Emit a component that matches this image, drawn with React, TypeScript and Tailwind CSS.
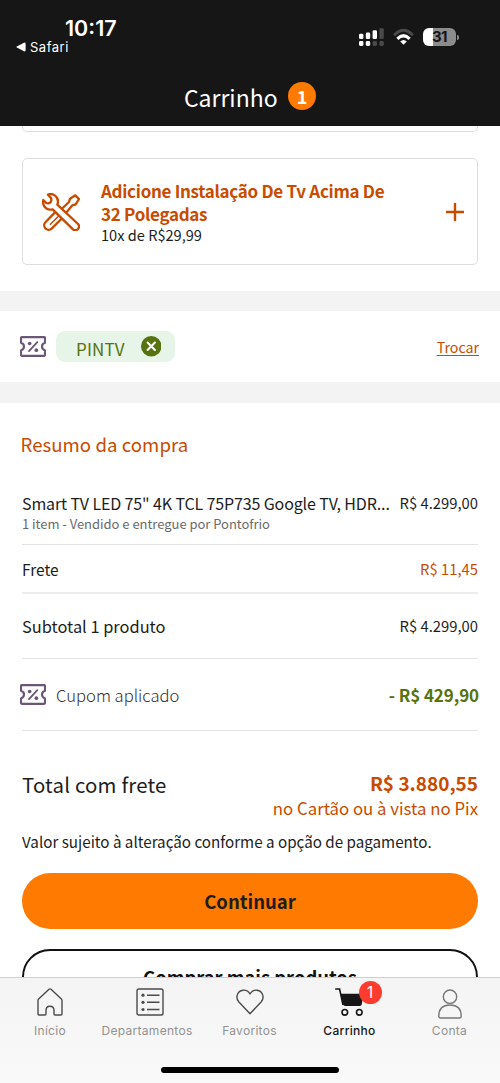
import type { ReactNode } from "react";

const brand = "font-['Noto_Sans_CJK_SC','Noto_Sans',sans-serif]";
const system = "font-['Inter','Liberation_Sans',sans-serif]";

function TicketIcon() {
  return (
    <svg viewBox="60 153 78 62" className="h-[21px] w-[26px] shrink-0" fill="none" stroke="#6b5677" strokeWidth="6.5" strokeLinejoin="round" strokeLinecap="round">
      <path d="M66 156H132Q135 156 135 159V173Q126 176 126 184T135 196V209Q135 212 132 212H66Q63 212 63 209V196Q72 192 72 184T63 173V159Q63 156 66 156Z" />
      <path d="M87 198L112 171" strokeWidth="5.5" />
      <circle cx="89" cy="175" r="5.5" fill="#6b5677" stroke="none" />
      <circle cx="109" cy="195" r="5.5" fill="#6b5677" stroke="none" />
    </svg>
  );
}

function ToolsIcon() {
  return (
    <svg viewBox="126 128 114 114" className="h-[38px] w-[38px] shrink-0" fill="none" stroke="#c84b00" strokeWidth="7" strokeLinejoin="round" strokeLinecap="round">
      <path d="M144 133C158 127 174 138 174 153Q174 158 172 163L234 221A11 11 0 0 1 219 237L158 177C144 181 129 171 129 156L130 149L139 158Q146 161 151 156T153 143Z" />
      <path d="M188 173L207 155L210 145L226 135L237 146L227 162L217 165L201 184" />
      <path d="M165 186L137 215A12 12 0 0 0 155 235L184 206" />
      <path d="M151 222L174 199" strokeWidth="4.5" />
    </svg>
  );
}

function StatusBar() {
  return (
    <div className={`flex h-[68px] justify-between ${system}`}>
      <div className="pl-4 pt-[17px]">
        <div className="pl-[49px] text-[21.5px] font-semibold leading-[22px]">10:17</div>
        <div className="flex items-center gap-[4px] text-[13px] leading-[16px] tracking-[0.5px]">
          <svg viewBox="0 0 10 10" className="h-[10px] w-[10px]" fill="white"><path d="M0.8 4.4L8 .7Q9.6 .2 9.6 1.7V8.3Q9.6 9.8 8 9.3L.8 5.6Q0 5 .8 4.4Z" /></svg>
          Safari
        </div>
      </div>
      <div className="flex items-start pr-[41px] pt-7">
        <svg viewBox="0 0 25 18" className="mr-[9.5px] h-[18px] w-[25px]" fill="white">
          <rect x="0" y="5.8" width="4.4" height="5.3" rx="1.4" />
          <rect x="6.8" y="4.5" width="4.4" height="6.6" rx="1.4" />
          <rect x="13.6" y="2.2" width="4.4" height="8.9" rx="1.4" />
          <rect x="20.4" y="0.2" width="4.4" height="10.9" rx="1.4" fill="#4a4a4a" />
          <rect x="0" y="13" width="4.4" height="5" rx="1.4" />
          <rect x="6.8" y="13" width="4.4" height="5" rx="1.4" />
          <rect x="13.6" y="13" width="4.4" height="5" rx="1.4" fill="#4a4a4a" />
          <rect x="20.4" y="13" width="4.4" height="5" rx="1.4" fill="#4a4a4a" />
        </svg>
        <svg viewBox="0 0 21 18" className="mr-[9px] h-[18px] w-[21px]" fill="none">
          <path d="M1.2 7.2Q10.5 -2.8 19.8 7.2" stroke="#4a4a4a" strokeWidth="3" />
          <path d="M4.4 10.8Q10.5 4.8 16.6 10.8" stroke="white" strokeWidth="3.2" />
          <path d="M7.2 13.6Q10.5 10.6 13.8 13.6L10.5 16.8Z" fill="white" />
        </svg>
        <div className="flex h-[18px] w-[33px] items-center justify-center rounded-[6px] bg-[linear-gradient(to_right,white_10px,#8c8c8c_10px)] text-[15px] font-bold leading-[18px] tracking-[-0.5px] text-[#161616]">31</div>
        <div className="ml-px mt-[6.5px] h-[5px] w-[2px] rounded-r-full bg-[#8c8c8c]" />
      </div>
    </div>
  );
}

function Tab({ label, active, width, children }: { label: string; active?: boolean; width: string; children: ReactNode }) {
  return (
    <div className={`flex flex-col items-center ${width}`}>
      <div className="flex h-[44px] items-center pt-[4px]">{children}</div>
      <div className={`whitespace-nowrap text-[12px] leading-[18px] tracking-[0.3px] ${active ? "font-medium text-[#161616]" : "text-[#929292]"}`}>{label}</div>
    </div>
  );
}

export default function App() {
  return (
    <div className={`flex h-[1083px] w-full flex-col overflow-hidden bg-white text-[#1d1d1d] ${brand}`}>
      <header className="h-[126px] shrink-0 bg-[#161616] text-white">
        <StatusBar />
        <div className="flex h-[58px] items-center justify-center gap-[10.5px]">
          <h1 className="text-[23px] font-normal leading-[58px]">Carrinho</h1>
          <span className="mb-[2px] flex h-7 w-7 items-center justify-center rounded-full bg-[#ff7a00] text-[18px] font-bold leading-[28px]">1</span>
        </div>
      </header>

      <main className="min-h-0 flex-1 overflow-hidden">
        <div className="mx-[22px] h-[6px] rounded-b-[5px] border border-t-0 border-[#dedede]" />

        <section className="mx-[22px] mt-[26px] flex h-[107px] items-center rounded-[5px] border border-[#dedede] pl-[19px] pr-[13px]">
          <ToolsIcon />
          <div className="ml-[21px] w-[300px]">
            <div className="whitespace-nowrap text-[17px] font-bold leading-[23px] tracking-[-0.3px] text-[#c84b00]">
              Adicione Instalação De Tv Acima De<br />32 Polegadas
            </div>
            <div className="text-[14.6px] leading-[20px]">10x de R$29,99</div>
          </div>
          <svg viewBox="0 0 18 18" className="ml-auto h-[18px] w-[18px]" stroke="#c84b00" strokeWidth="2.4"><path d="M9 0V18M0 9H18" /></svg>
        </section>

        <div className="mt-[26px] h-[20px] bg-[#f3f3f3]" />
        <section className="flex h-[71px] items-center pl-5 pr-[21px]">
          <TicketIcon />
          <div className="ml-[10px] flex h-[31px] w-[119px] items-center rounded-[9px] bg-[#e7f4e8] pl-[20px] pr-[14px] text-[#56730f]">
            <span className="pt-[4px] text-[17px] leading-[28px] tracking-[0.15px]">PINTV</span>
            <svg viewBox="0 0 20 20" className="ml-auto h-[20.5px] w-[20.5px]"><circle cx="10" cy="10" r="10" fill="#56730f" /><path d="M6.4 6.4L13.6 13.6M13.6 6.4L6.4 13.6" stroke="white" strokeWidth="2" strokeLinecap="round" /></svg>
          </div>
          <span className="ml-auto text-[14.2px] leading-5 text-[#c84b00] underline decoration-1 underline-offset-2">Trocar</span>
        </section>
        <div className="h-[21px] bg-[#f3f3f3]" />

        <section className="px-[22px]">
          <h2 className="-ml-[1.5px] pt-[28px] text-[18.6px] font-normal leading-[26px] tracking-[0.05px] text-[#c84b00]">Resumo da compra</h2>
          <div className="mt-[35px] h-[53px] border-b border-[#e2e2e2]">
            <div className="flex items-center justify-between whitespace-nowrap leading-[22px]">
              <span className="text-[16px] tracking-[-0.13px]">Smart TV LED 75" 4K TCL 75P735 Google TV, HDR...</span>
              <span className="text-[14.8px]">R$ 4.299,00</span>
            </div>
            <div className="text-[13px] leading-[20px] tracking-[-0.03px] text-[#6a6a6a]">1 item - Vendido e entregue por Pontofrio</div>
          </div>
          <div className="flex h-[49px] items-center justify-between border-b-2 border-[#ececec] pt-[2px]">
            <span className="text-[15.5px]">Frete</span>
            <span className="text-[14.8px] text-[#c84b00]">R$ 11,45</span>
          </div>
          <div className="flex h-[65px] items-center justify-between border-b border-[#e2e2e2]">
            <span className="text-[16.4px]">Subtotal 1 produto</span>
            <span className="text-[14.8px]">R$ 4.299,00</span>
          </div>
          <div className="-mr-[1px] flex h-[71px] items-center">
            <div className="-ml-[2px] flex items-center gap-[10px]">
              <TicketIcon />
              <span className="pt-px text-[16.6px] font-light text-[#303030]">Cupom aplicado</span>
            </div>
            <span className="ml-auto pt-px text-[17px] font-bold tracking-[-0.1px] text-[#56730f]">- R$ 429,90</span>
          </div>
          <div className="h-px bg-[#e2e2e2]" />
          <div className="mt-[39px] flex justify-between whitespace-nowrap">
            <span className="text-[20.4px] leading-[28px] tracking-[0.2px]">Total com frete</span>
            <div className="text-right text-[#c84b00]">
              <div className="text-[19px] font-bold leading-[26px]">R$ 3.880,55</div>
              <div className="text-[16.8px] leading-[25px]">no Cartão ou à vista no Pix</div>
            </div>
          </div>
          <div className="mt-[8px] whitespace-nowrap text-[15.2px] leading-[24px]">Valor sujeito à alteração conforme a opção de pagamento.</div>
          <button className="mt-[20px] block h-[56px] w-full rounded-full bg-[#ff7a00] text-[18.5px] font-bold leading-[56px] text-[#1d1d1d]">Continuar</button>
          <button className="mt-[20px] block h-[56px] w-full rounded-full border-[2.5px] border-[#111] text-[18.4px] font-bold leading-[51px] text-[#111]">Comprar mais produtos</button>
        </section>
      </main>

      <nav className={`flex h-[106px] shrink-0 flex-col border-t border-[#cfcfcf] bg-gradient-to-b from-[#f4f4f4] to-[#f9f9f9] ${system}`}>
        <div className="flex">
          <Tab label="Início" width="w-[100px]">
            <svg viewBox="0 0 26 28" className="h-7 w-[26px]" fill="none" stroke="#4b4b4b" strokeWidth="1.4" strokeLinejoin="round"><path d="M1 12.5Q1 11.7 1.6 11.1L12 1.2Q13 .5 14 1.2L24.4 11.1Q25 11.7 25 12.5V26Q25 27 24 27H18Q17 27 17 26V22.5Q17 18.3 13 18.3T9 22.5V26Q9 27 8 27H2Q1 27 1 26Z" /></svg>
          </Tab>
          <Tab label="Departamentos" width="w-[94px] mr-[5px] [&>div:first-child]:translate-x-[3px]">
            <svg viewBox="0 0 28 28" className="h-7 w-7" fill="none" stroke="#4b4b4b" strokeWidth="1.4"><rect x="1" y="1" width="26" height="26" rx="1.8" /><path d="M11 7.2H23.5M11 14.3H23.5M11 21.5H23.5" /><g fill="#4b4b4b" stroke="none"><circle cx="7" cy="7.2" r="1.6" /><circle cx="7" cy="14.3" r="1.6" /><circle cx="7" cy="21.5" r="1.6" /></g></svg>
          </Tab>
          <Tab label="Favoritos" width="w-[101px]">
            <svg viewBox="0 0 28 26" className="h-[26px] w-7" fill="none" stroke="#4b4b4b" strokeWidth="1.4" strokeLinejoin="round"><path d="M14 24.7L2.7 12.8C-.6 9 .9 2 7 1.2Q11.6 .8 14 5Q16.4 .8 21 1.2C27.1 2 28.6 9 25.3 12.8Z" /></svg>
          </Tab>
          <Tab label="Carrinho" active width="w-[99px]">
            <div className="relative">
              <svg viewBox="0 0 30 28" className="h-7 w-[30px]" fill="none" stroke="#161616" strokeWidth="1.6"><path d="M.2 1H4.6L8 17" /><path d="M5.6 5.8H28.5L26.8 16.2Q26.5 18 24.7 18H10.2Q8.4 18 8 16.2Z" fill="#161616" stroke="none" /><circle cx="9.8" cy="24.3" r="2.8" /><circle cx="24.3" cy="24.3" r="2.8" /></svg>
              <span className="absolute -top-[7px] left-[24px] flex h-[23px] w-[23px] items-center justify-center rounded-full bg-[#ff3b30] text-[16px] leading-[23px] text-white">1</span>
            </div>
          </Tab>
          <Tab label="Conta" width="w-[101px]">
            <svg viewBox="0 0 24 30" className="mt-[3px] h-[30px] w-6" fill="none" stroke="#777" strokeWidth="1.4" strokeLinejoin="round"><circle cx="12" cy="7.7" r="6.7" /><path d="M.8 27C.8 19 5.5 16 12 16S23.2 19 23.2 27Q23.2 29 21.5 29H2.5Q.8 29 .8 27Z" /></svg>
          </Tab>
        </div>
        <div className="mx-auto mt-auto mb-[10px] h-[6.5px] w-[178px] rounded-full bg-black" />
      </nav>
    </div>
  );
}
